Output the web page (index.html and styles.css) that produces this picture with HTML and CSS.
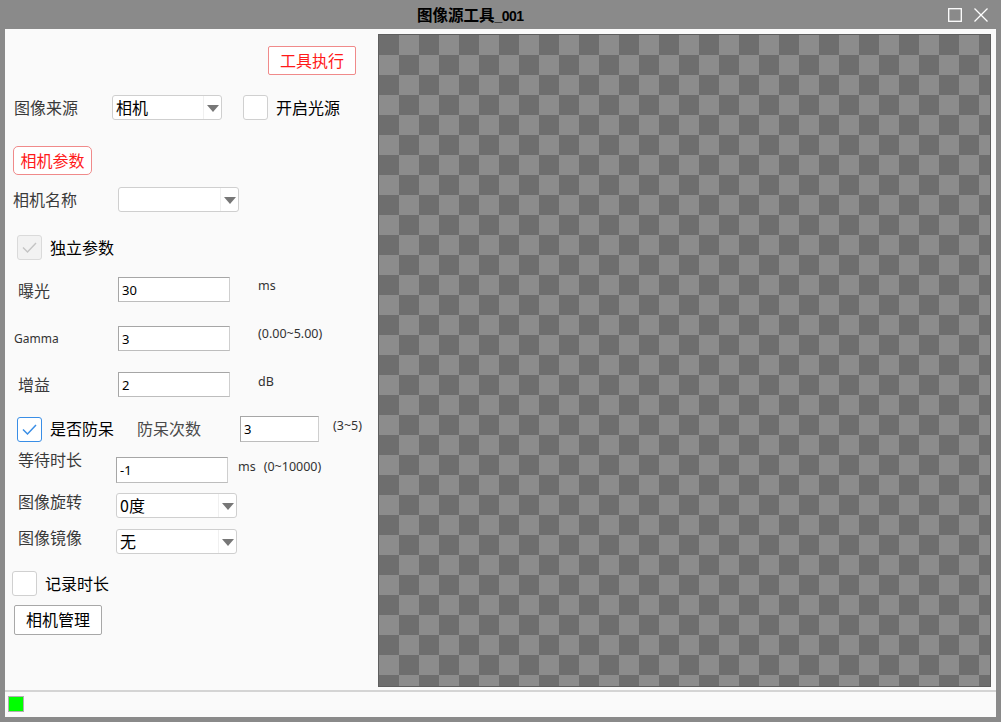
FILE: index.html
```html
<!DOCTYPE html>
<html lang="zh-CN">
<head>
<meta charset="utf-8">
<title>图像源工具_001</title>
<link rel="stylesheet" href="styles.css">
</head>
<body>
<div class="window">
  <div class="titlebar">
    <span class="title">图像源工具<span class="title-num">_001</span></span>
    <span class="tb-icons">
      <svg width="14" height="14" viewBox="0 0 14 14"><rect x="0.7" y="0.7" width="12.6" height="12.6" fill="none" stroke="#fff" stroke-width="1.3"/></svg>
      <svg width="14" height="14" viewBox="0 0 14 14"><path d="M0.5 0.5 L13.5 13.5 M13.5 0.5 L0.5 13.5" stroke="#fff" stroke-width="1.3" fill="none"/></svg>
    </span>
  </div>
  <div class="client">
    <div class="main">
      <div class="panel">
        <div class="row r1"><button class="btn-red run">工具执行</button></div>

        <div class="row r2">
          <span class="lbl w98 up1">图像来源</span>
          <div class="combo w110"><span class="combo-text">相机</span><span class="combo-arrow"></span></div>
          <span class="chk ml21"></span>
          <span class="chk-text ml8">开启光源</span>
        </div>

        <div class="row r3"><button class="btn-red cam">相机参数</button></div>

        <div class="row r4">
          <span class="lbl w105 up1">相机名称</span>
          <div class="combo w121"><span class="combo-text"></span><span class="combo-arrow"></span></div>
        </div>

        <div class="row r5">
          <span class="chk disabled"><svg width="25" height="25" viewBox="0 0 25 25"><path d="M6 12.5 L10.5 17 L19 8" fill="none" stroke="#c4c4c4" stroke-width="1.4"/></svg></span>
          <span class="chk-text ml8">独立参数</span>
        </div>

        <div class="row r6">
          <span class="lbl w100">曝光</span>
          <input class="field w112" value="30">
          <span class="unit ml28">ms</span>
        </div>

        <div class="row r7">
          <span class="lbl-small w104">Gamma</span>
          <input class="field w112" value="3">
          <span class="unit ml28">(0.00~5.00)</span>
        </div>

        <div class="row r8">
          <span class="lbl w100 up1">增益</span>
          <input class="field w112" value="2">
          <span class="unit ml28">dB</span>
        </div>

        <div class="row r9">
          <span class="chk checked"><svg width="25" height="25" viewBox="0 0 25 25"><path d="M6 12.5 L10.5 17 L19 8" fill="none" stroke="#3a8ee6" stroke-width="1.5"/></svg></span>
          <span class="chk-text ml8">是否防呆</span>
          <span class="lbl gray ml23 up1">防呆次数</span>
          <input class="field w79 ml39" value="3">
          <span class="unit ml14">(3~5)</span>
        </div>

        <div class="row r10">
          <span class="lbl w98 high2">等待时长</span>
          <input class="field w112" value="-1">
          <span class="unit ml10">ms</span>
          <span class="unit ml8">(0~10000)</span>
        </div>

        <div class="row r11">
          <span class="lbl w98 high">图像旋转</span>
          <div class="combo w121"><span class="combo-text">0度</span><span class="combo-arrow"></span></div>
        </div>

        <div class="row r12">
          <span class="lbl w98 high">图像镜像</span>
          <div class="combo w121"><span class="combo-text">无</span><span class="combo-arrow"></span></div>
        </div>

        <div class="row r13">
          <span class="chk"></span>
          <span class="chk-text ml8">记录时长</span>
        </div>

        <div class="row r14"><button class="btn-gray">相机管理</button></div>
      </div>
      <div class="viewer"></div>
    </div>
    <div class="statusbar"><span class="led"></span></div>
  </div>
</div>
</body>
</html>
```

FILE: styles.css
```css
* { box-sizing: border-box; }
html, body { margin: 0; padding: 0; }
body {
  width: 1001px;
  height: 722px;
  background: #8a8a8a;
  font-family: "Noto Sans", "Noto Sans CJK SC", sans-serif;
  overflow: hidden;
}
.window {
  width: 1001px;
  height: 722px;
  display: flex;
  flex-direction: column;
}
.titlebar {
  height: 29px;
  display: flex;
  align-items: center;
}
.title {
  margin-left: 417px;
  font-family: "Noto Sans CJK SC", sans-serif;
  font-weight: bold;
  font-size: 15.5px;
  color: #000;
  line-height: 1;
}
.title-num {
  font-family: "Liberation Sans", sans-serif;
  font-size: 14px;
  letter-spacing: -0.5px;
}
.tb-icons {
  margin-left: auto;
  margin-right: 13px;
  display: flex;
  gap: 12px;
  align-items: center;
}
.client {
  margin: 0 5px;
  height: 688px;
  background: #fafafa;
  display: flex;
  flex-direction: column;
}
.main {
  height: 661px;
  display: flex;
}
.panel {
  width: 373px;
  display: flex;
  flex-direction: column;
}
.viewer {
  width: 613px;
  height: 653px;
  margin-top: 5px;
  border: 1px solid #5e5e5e;
  background: repeating-conic-gradient(#8c8c8c 0 25%, #6e6e6e 0 50%) 0 0 / 40px 40px;
}
.statusbar {
  border-top: 2px solid #d4d4d4;
  height: 27px;
  display: flex;
  align-items: center;
  padding-left: 3px;
}
.led {
  width: 16px;
  height: 16px;
  background: #00ff00;
  border: 1px solid #b0b0b0;
  margin-top: -1px;
}

/* rows */
.row { display: flex; align-items: center; flex: none; }
.r1 { height: 29px; margin-top: 17px; padding-left: 263px; }
.r2 { height: 25px; margin-top: 20px; padding-left: 9px; }
.r3 { height: 29px; margin-top: 26px; padding-left: 8px; }
.r4 { height: 25px; margin-top: 12px; padding-left: 8px; }
.r5 { height: 25px; margin-top: 23px; padding-left: 12px; }
.r6 { height: 25px; margin-top: 17px; padding-left: 13px; }
.r7 { height: 25px; margin-top: 24px; padding-left: 9px; }
.r8 { height: 25px; margin-top: 21px; padding-left: 13px; }
.r9 { height: 26px; margin-top: 19px; padding-left: 12px; }
.r10 { height: 26px; margin-top: 15px; padding-left: 13px; }
.r11 { height: 25px; margin-top: 10px; padding-left: 13px; }
.r12 { height: 25px; margin-top: 11px; padding-left: 13px; }
.r13 { height: 25px; margin-top: 17px; padding-left: 7px; }
.r14 { height: 30px; margin-top: 9px; padding-left: 9px; }

.w98 { width: 98px; flex: none; }
.w100 { width: 100px; flex: none; }
.w104 { width: 104px; flex: none; }
.w105 { width: 105px; flex: none; }
.w110 { width: 110px; flex: none; }
.w112 { width: 112px; flex: none; }
.w121 { width: 121px; flex: none; }
.w79 { width: 79px; flex: none; }

.field {
  height: 100%;
  border: 1px solid #a6a6a6;
  border-right-color: #cfcfcf;
  border-bottom-color: #bdbdbd;
  background: #fff;
  font-family: "Noto Sans", sans-serif;
  font-size: 13px;
  color: #000;
  padding: 0 0 0 3px;
  outline: none;
}

.ml8 { margin-left: 8px; }
.ml9 { margin-left: 9px; }
.ml10 { margin-left: 10px; }
.ml14 { margin-left: 14px; }
.ml21 { margin-left: 21px; }
.ml23 { margin-left: 23px; }
.ml28 { margin-left: 28px; }
.ml39 { margin-left: 39px; }

.lbl {
  font-family: "Noto Sans CJK SC", sans-serif;
  font-size: 16px;
  line-height: 1;
  color: #3a3a3a;
  position: relative;
}
.lbl.gray { color: #4a4a4a; }
.up1 { top: -1px; }
.high { top: -5px; }
.high2 { top: -11px; }
.lbl-small {
  font-size: 12px;
  color: #333;
  line-height: 1;
}
.unit {
  font-size: 12.5px;
  color: #333;
  line-height: 1;
  position: relative;
}
.r6 .unit { top: -3px; }
.r7 .unit { top: -4px; }
.r8 .unit { top: -2px; }
.r9 .unit { top: -3px; }
.r10 .unit { top: -3px; }
.chk-text {
  font-family: "Noto Sans CJK SC", sans-serif;
  font-size: 16px;
  line-height: 1;
  color: #000;
  position: relative;
  top: -1px;
}

button {
  font-family: "Noto Sans CJK SC", sans-serif;
  font-size: 16px;
  line-height: 1;
  padding: 0 0 2px;
  background: #fff;
  cursor: default;
}
.btn-red {
  color: #ff1a1a;
  border: 1px solid #f08a8a;
  height: 29px;
}
.btn-red.run { width: 88px; border-radius: 2px; }
.btn-red.cam { width: 79px; border-radius: 5px; }
.btn-gray {
  width: 88px;
  height: 30px;
  border: 1px solid #a8a8a8;
  border-radius: 2px;
  color: #000;
}

.combo {
  height: 25px;
  background: #fff;
  border: 1px solid #cfcfcf;
  border-radius: 3px;
  display: flex;
  align-items: center;
}
.combo-text {
  flex: 1;
  padding-left: 3px;
  font-family: "Noto Sans CJK SC", sans-serif;
  font-size: 16px;
  line-height: 1;
  color: #000;
  position: relative;
  top: -1px;
}
.combo-arrow {
  width: 18px;
  height: 23px;
  border-left: 1px solid #f0f0f0;
  position: relative;
}
.combo-arrow::after {
  content: "";
  position: absolute;
  left: 3px;
  top: 9px;
  border-left: 6px solid transparent;
  border-right: 6px solid transparent;
  border-top: 7px solid #777;
}

.chk {
  width: 25px;
  height: 25px;
  flex: none;
  border: 1px solid #d0d0d0;
  border-radius: 3px;
  background: #fff;
  display: flex;
  align-items: center;
  justify-content: center;
}
.chk svg { display: block; margin: -1px; }
.chk.disabled { background: #f2f2f2; border-color: #dadada; }
.chk.checked { border-color: #3a8ee6; }
```
